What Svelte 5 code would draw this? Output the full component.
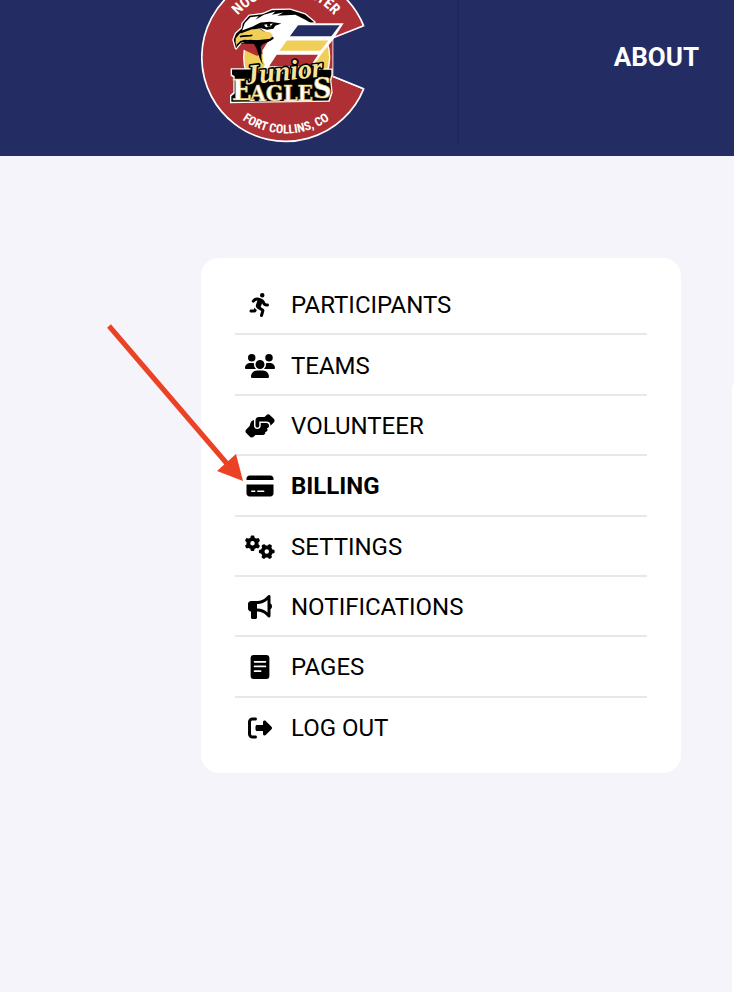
<script>
  const items = [
    {
      label: 'Participants',
      box: '0 0 448 512',
      path: 'M320 48a48 48 0 1 0 -96 0 48 48 0 1 0 96 0zM125.7 175.5c9.9-9.9 23.4-15.5 37.5-15.5c1.9 0 3.8 .1 5.6 .3L137.6 254c-9.3 28 1.7 58.8 26.8 74.5l86.2 53.9-25.4 88.8c-4.9 17 5 34.7 22 39.6s34.7-5 39.6-22l28.7-100.4c5.9-20.6-2.6-42.6-20.7-53.9L238 299l30.9-82.4 5.1 12.3C289 264.7 323.9 288 362.7 288H384c17.7 0 32-14.3 32-32s-14.3-32-32-32H362.7c-12.9 0-24.6-7.8-29.5-19.7l-6.3-15c-14.6-35.1-44.1-61.9-80.5-73.1l-48.7-15c-11.1-3.4-22.7-5.2-34.4-5.2c-31 0-60.8 12.3-82.7 34.3L57.4 153.4c-12.5 12.5-12.5 32.8 0 45.3s32.8 12.5 45.3 0l23.1-23.1zM91.2 352H32c-17.7 0-32 14.3-32 32s14.3 32 32 32h69.6c19 0 36.2-11.2 43.9-28.5L157 361.6l-9.5-6c-17.5-10.9-30.5-26.8-37.9-44.9L91.2 352z'
    },
    {
      label: 'Teams',
      box: '0 0 640 512',
      path: 'M144 0a80 80 0 1 1 0 160A80 80 0 1 1 144 0zM512 0a80 80 0 1 1 0 160A80 80 0 1 1 512 0zM0 298.7C0 239.8 47.8 192 106.7 192h42.7c15.9 0 31 3.5 44.6 9.7c-1.3 7.2-1.9 14.7-1.9 22.3c0 38.2 16.8 72.5 43.3 96c-.2 0-.4 0-.7 0H21.3C9.6 320 0 310.4 0 298.7zM405.3 320c-.2 0-.4 0-.7 0c26.6-23.5 43.3-57.8 43.3-96c0-7.6-.7-15-1.9-22.3c13.6-6.3 28.7-9.7 44.6-9.7h42.7C592.2 192 640 239.8 640 298.7c0 11.8-9.6 21.3-21.3 21.3H405.3zM224 224a96 96 0 1 1 192 0 96 96 0 1 1 -192 0zM128 485.3C128 411.7 187.7 352 261.3 352H378.7C452.3 352 512 411.7 512 485.3c0 14.7-11.9 26.7-26.7 26.7H154.7c-14.7 0-26.7-11.9-26.7-26.7z'
    },
    {
      label: 'Volunteer',
      box: '0 0 640 512',
      path: 'M544 248v3.3l69.7-69.7c21.9-21.9 21.9-57.3 0-79.2L535.6 24.4c-21.9-21.9-57.3-21.9-79.2 0L416.3 64.5c-2.7-.3-5.5-.5-8.3-.5H296c-37.1 0-67.6 28-71.6 64H224V248c0 22.1 17.9 40 40 40s40-17.9 40-40V176c0 0 0-.1 0-.1V160l16 0 136 0c0 0 0 0 .1 0H464c44.2 0 80 35.8 80 80v8zM336 192v56c0 39.8-32.2 72-72 72s-72-32.2-72-72V129.4c-35.9 6.2-65.8 32.3-76 68.2L99.5 255.2 26.3 328.4c-21.9 21.9-21.9 57.3 0 79.2l78.1 78.1c21.9 21.9 57.3 21.9 79.2 0l37.7-37.7c.9 0 1.8 .1 2.7 .1H384c26.5 0 48-21.5 48-48c0-5.6-1-11-2.7-16H432c26.5 0 48-21.5 48-48c0-12.8-5-24.4-13.2-33c25.7-5 45.1-27.6 45.2-54.8v-.4c-.1-30.8-25.1-55.8-56-55.8c0 0 0 0 0 0l-120 0z'
    },
    {
      label: 'Billing',
      active: true,
      box: '0 0 576 512',
      path: 'M64 32C28.7 32 0 60.7 0 96v32H576V96c0-35.3-28.7-64-64-64H64zM576 224H0V416c0 35.3 28.7 64 64 64H512c35.3 0 64-28.7 64-64V224zM112 352h64c8.8 0 16 7.2 16 16s-7.2 16-16 16H112c-8.8 0-16-7.2-16-16s7.2-16 16-16zm112 16c0-8.8 7.2-16 16-16H368c8.8 0 16 7.2 16 16s-7.2 16-16 16H240c-8.8 0-16-7.2-16-16z'
    },
    {
      label: 'Settings',
      box: '0 0 640 512',
      path: 'M308.5 135.3c7.1-6.3 9.9-16.2 6.2-25c-2.3-5.3-4.8-10.5-7.6-15.5L304 89.4c-3-5-6.3-9.9-9.8-14.6c-5.7-7.6-15.7-10.1-24.7-7.1l-28.2 9.3c-10.7-8.8-23-16-36.2-20.9L199 27.1c-1.9-9.3-9.1-16.7-18.5-17.8C173.9 8.4 167.2 8 160.4 8h-.7c-6.8 0-13.5 .4-20.1 1.2c-9.4 1.1-16.6 8.6-18.5 17.8L115 56.1c-13.3 5-25.5 12.1-36.2 20.9L50.5 67.8c-9-3-19-.5-24.7 7.1c-3.5 4.7-6.8 9.6-9.9 14.6l-3 5.3c-2.8 5-5.3 10.2-7.6 15.6c-3.7 8.7-.9 18.6 6.2 25l22.2 19.8C32.6 161.9 32 168.9 32 176s.6 14.1 1.7 20.9L11.5 216.7c-7.1 6.3-9.9 16.2-6.2 25c2.3 5.3 4.8 10.5 7.6 15.6l3 5.2c3 5.1 6.3 9.9 9.9 14.6c5.7 7.6 15.7 10.1 24.7 7.1l28.2-9.3c10.7 8.8 23 16 36.2 20.9l6.1 29.1c1.9 9.3 9.1 16.7 18.5 17.8c6.7 .8 13.5 1.2 20.4 1.2s13.7-.4 20.4-1.2c9.4-1.1 16.6-8.6 18.5-17.8l6.1-29.1c13.3-5 25.5-12.1 36.2-20.9l28.2 9.3c9 3 19 .5 24.7-7.1c3.5-4.7 6.8-9.5 9.8-14.6l3.1-5.4c2.8-5 5.3-10.2 7.6-15.5c3.7-8.7 .9-18.6-6.2-25l-22.2-19.8c1.1-6.8 1.7-13.8 1.7-20.9s-.6-14.1-1.7-20.9l22.2-19.8zM112 176a48 48 0 1 1 96 0 48 48 0 1 1 -96 0zM504.7 500.5c6.3 7.1 16.2 9.9 25 6.2c5.3-2.3 10.5-4.8 15.5-7.6l5.4-3.1c5-3 9.9-6.3 14.6-9.8c7.6-5.7 10.1-15.7 7.1-24.7l-9.3-28.2c8.8-10.7 16-23 20.9-36.2l29.1-6.1c9.3-1.9 16.7-9.1 17.8-18.5c.8-6.7 1.2-13.5 1.2-20.4s-.4-13.7-1.2-20.4c-1.1-9.4-8.6-16.6-17.8-18.5L583.9 307c-5-13.3-12.1-25.5-20.9-36.2l9.3-28.2c3-9 .5-19-7.1-24.7c-4.7-3.5-9.6-6.8-14.6-9.9l-5.3-3c-5-2.8-10.2-5.3-15.6-7.6c-8.7-3.7-18.6-.9-25 6.2l-19.8 22.2c-6.8-1.1-13.8-1.7-20.9-1.7s-14.1 .6-20.9 1.7l-19.8-22.2c-6.3-7.1-16.2-9.9-25-6.2c-5.3 2.3-10.5 4.8-15.6 7.6l-5.2 3c-5.1 3-9.9 6.3-14.6 9.9c-7.6 5.7-10.1 15.7-7.1 24.7l9.3 28.2c-8.8 10.7-16 23-20.9 36.2L315.1 313c-9.3 1.9-16.7 9.1-17.8 18.5c-.8 6.7-1.2 13.5-1.2 20.4s.4 13.7 1.2 20.4c1.1 9.4 8.6 16.6 17.8 18.5l29.1 6.1c5 13.3 12.1 25.5 20.9 36.2l-9.3 28.2c-3 9-.5 19 7.1 24.7c4.7 3.5 9.5 6.8 14.6 9.8l5.4 3.1c5 2.8 10.2 5.3 15.5 7.6c8.7 3.7 18.6 .9 25-6.2l19.8-22.2c6.8 1.1 13.8 1.7 20.9 1.7s14.1-.6 20.9-1.7l19.8 22.2zM464 304a48 48 0 1 1 0 96 48 48 0 1 1 0-96z'
    },
    {
      label: 'Notifications',
      box: '0 0 512 512',
      path: 'M480 32c0-12.9-7.8-24.6-19.8-29.6s-25.7-2.2-34.9 6.9L381.7 53c-48 48-113.1 75-181 75H192 160 64c-35.3 0-64 28.7-64 64v96c0 35.3 28.7 64 64 64l0 128c0 17.7 14.3 32 32 32h64c17.7 0 32-14.3 32-32V352l8.7 0c67.9 0 133 27 181 75l43.6 43.6c9.2 9.2 22.9 11.9 34.9 6.9s19.8-16.6 19.8-29.6V300.4c18.6-8.8 32-32.5 32-60.4s-13.4-51.6-32-60.4V32zm-64 76.7V240 371.3C357.2 317.8 280.5 288 200.7 288H192V192h8.7c79.8 0 156.5-29.8 215.3-83.3z'
    },
    {
      label: 'Pages',
      box: '0 0 400 512',
      path: 'M64 0H336a64 64 0 0 1 64 64V448a64 64 0 0 1-64 64H64a64 64 0 0 1-64-64V64A64 64 0 0 1 64 0zM84 128a18 18 0 0 0 0 36H316a18 18 0 0 0 0-36zM84 226a18 18 0 0 0 0 36H316a18 18 0 0 0 0-36zM84 324a18 18 0 0 0 0 36H214a18 18 0 0 0 0-36z'
    },
    {
      label: 'Log out',
      box: '0 0 512 512',
      path: 'M377.9 105.9L500.7 228.7c7.2 7.2 11.3 17.1 11.3 27.3s-4.1 20.1-11.3 27.3L377.9 406.1c-6.4 6.4-15 9.9-24 9.9c-18.7 0-33.9-15.2-33.9-33.9l0-62.1-128 0c-17.7 0-32-14.3-32-32l0-64c0-17.7 14.3-32 32-32l128 0 0-62.1c0-18.7 15.2-33.9 33.9-33.9c9 0 17.6 3.6 24 9.9zM160 96L96 96c-17.7 0-32 14.3-32 32l0 256c0 17.7 14.3 32 32 32l64 0c17.7 0 32 14.3 32 32s-14.3 32-32 32l-64 0c-53 0-96-43-96-96L0 128C0 75 43 32 96 32l64 0c17.7 0 32 14.3 32 32s-14.3 32-32 32z'
    }
  ];
</script>

<div class="page">
  <header>
    <a class="logo" href="#home" aria-label="Junior Eagles home">
      <svg viewBox="33 0 492 426">
        <defs>
          <path id="arc-top" d="M96 171A192 192 0 0 1 480 171" />
          <path id="arc-bottom" d="M60 171A228 228 0 0 0 516 171" />
        </defs>
        <path class="ring" d="M521 76A252 252 0 1 0 521 265L430 228V118Z" />
        <path class="navy" d="M430 112L523 74V266L430 228Z" />
        <path fill="none" stroke="#fff" stroke-width="5" d="M521 76L424 114M430 228L521 265" />
        <circle class="gold" cx="290" cy="171" r="129" stroke="#fff" stroke-width="4" />
        <path class="red" d="M155 145V47L205 30H345L405 64V106L200 166Z" />
        <text class="ring-text top"><textPath href="#arc-top" startOffset="50%">NOCO ICE CENTER</textPath></text>
        <text class="ring-text"><textPath href="#arc-bottom" startOffset="50%">FORT COLLINS, CO</textPath></text>

        <!-- wing feathers -->
        <path fill="#fff" d="M300 68H461L428 119L396 158L366 202H220L250 140Z" />
        <path class="navy" d="M324 74H449L424 107H299Z" />
        <path class="gold" d="M290 120H415L391 151H268Z" />
        <path class="red" d="M258 163H384L361 197H235Z" />

        <!-- eagle head -->
        <path stroke="#fff" stroke-width="8" stroke-linejoin="round" d="M138 143L131 118L138 100L156 83L158 69L178 46L218 41L246 29L300 28L345 42L373 65L320 68L250 112L180 122L152 126Z" />
        <path d="M138 143L131 118L138 100L156 83L158 69L178 46L218 41L246 29L300 28L345 42L373 65L320 68L250 112L180 122L152 126Z" />
        <path fill="#fff" d="M160 80L164 68L181 50L206 47L196 58L222 43L256 33L246 43L280 36L262 46L316 43L346 58L366 70H326L266 154L231 207L219 181L217 150L232 126L252 112L236 102L212 85L174 90L156 91Z" />
        <path class="gold" d="M137 127L137 114L150 98L174 88L208 84L222 93L240 95L248 104L240 120L219 126L188 119L162 118L145 128L139 138Z" />
        <path fill="none" stroke="#000" stroke-width="5" d="M140 135L153 123L181 120L211 123C227 124 240 119 250 112M150 109C162 104 175 108 187 104" />
        <path d="M150 130C172 120 212 119 250 113C238 128 214 126 212 141C217 152 210 168 219 193C204 170 203 140 190 130Z" />
        <path d="M154 91L190 77L212 66L240 64L274 69L256 76L250 85L231 88L214 83L184 87L152 99Z" />
        <path fill="#fff" d="M222 73L249 69L240 79L228 80Z" />
        <circle cx="236" cy="74" r="5" />

        <!-- wordmark -->
        <path fill="#fff" d="M122 203H190L215 216H380V204H428V224L424 239L428 276L419 304L120 308V284L130 275V231L122 226Z" />
        <path d="M126 207H188L215 220H384V208H424V222L420 238L424 274L415 300L124 304V287L134 279V227L126 222Z" />
        <text class="word big" x="126" y="297">E</text>
        <text class="word" x="180" y="300">AGLE</text>
        <text class="word big" x="369" y="293">S</text>
        <text class="script" x="168" y="252" transform="rotate(-6 168 252)">Junior</text>
      </svg>
    </a>
    <nav class="top-nav">
      <a href="#about">ABOUT</a>
    </nav>
  </header>

  <main>
    <aside>
      <ul>
        {#each items as item}
          <li>
            <a href="#{item.label}" class:active={item.active}>
              <svg class="icon" viewBox={item.box}><path fill-rule="evenodd" d={item.path} /></svg>
              <span>{item.label}</span>
            </a>
          </li>
        {/each}
      </ul>
      <svg class="pointer" viewBox="0 0 140 160">
        <path d="M5 3L125 143" />
        <polygon points="139,158 132,131 113,148" />
      </svg>
    </aside>
    <section></section>
  </main>
</div>

<style>
  :global(body) {
    margin: 0;
    background: #f5f4fa;
  }
  .page {
    min-height: 100vh;
    display: flex;
    flex-direction: column;
    overflow: hidden;
    font-family: Roboto, sans-serif;
    background: #f5f4fa;
  }
  header {
    display: flex;
    align-items: flex-start;
    padding: 0 35px 13px 201px;
    background: #242c64;
  }
  .logo {
    width: 256px;
    border-right: 2px solid #20285b;
  }
  .logo svg {
    display: block;
    width: 164px;
    height: 143px;
  }
  .ring {
    fill: #ae3034;
    stroke: #fff;
    stroke-width: 5;
  }
  .red {
    fill: #ae3034;
  }
  .gold {
    fill: #f0ce58;
  }
  .navy {
    fill: #242c64;
  }
  .ring-text {
    font: bold 37px "Liberation Sans Narrow", "Roboto Condensed", sans-serif;
    fill: #fff;
    text-anchor: middle;
  }
  .ring-text.top {
    font-size: 44px;
  }
  .word {
    font: bold 68px "DejaVu Serif Condensed", "DejaVu Serif", serif;
    fill: #fff;
    stroke: #d8b64a;
    stroke-width: 2;
  }
  .big {
    font-size: 86px;
  }
  .script {
    font: italic bold 84px "Liberation Serif", serif;
    fill: #f8e29a;
    stroke: #000;
    stroke-width: 10;
    stroke-linejoin: round;
    paint-order: stroke;
  }
  .top-nav {
    margin-left: auto;
    padding-top: 42px;
  }
  .top-nav a {
    font-size: 26px;
    line-height: 30px;
    font-weight: 700;
    color: #fff;
    text-decoration: none;
  }
  main {
    flex: 1;
    display: grid;
    grid-template-columns: minmax(0, 480px) minmax(400px, 1fr);
    align-items: start;
    gap: 51px;
    margin-right: -400px;
    padding: 102px 0 0 201px;
  }
  aside {
    position: relative;
    padding: 17px 34px 15px;
    border-radius: 18px;
    background: #fff;
  }
  ul {
    display: grid;
    grid-auto-rows: 1fr;
    min-height: 483px;
    margin: 0;
    padding: 0;
    list-style: none;
  }
  li {
    display: flex;
    border-bottom: 2px solid #e7e7ec;
  }
  li:last-child {
    border-color: transparent;
  }
  li a {
    flex: 1;
    display: flex;
    align-items: center;
    gap: 16px;
    padding: 2px 0 0 10px;
    font-size: 24px;
    line-height: 28px;
    color: #000;
    text-decoration: none;
    text-transform: uppercase;
  }
  li a.active {
    font-weight: 700;
  }
  .icon {
    width: 30px;
    height: 24px;
  }
  .pointer {
    position: absolute;
    top: 65px;
    left: -97px;
    width: 140px;
    height: 160px;
    pointer-events: none;
  }
  .pointer path {
    stroke: #eb4226;
    stroke-width: 5;
  }
  .pointer polygon {
    fill: #eb4226;
  }
  section {
    align-self: stretch;
    margin-top: 114px;
    border-radius: 18px 18px 0 0;
    background: #fff;
  }
</style>
